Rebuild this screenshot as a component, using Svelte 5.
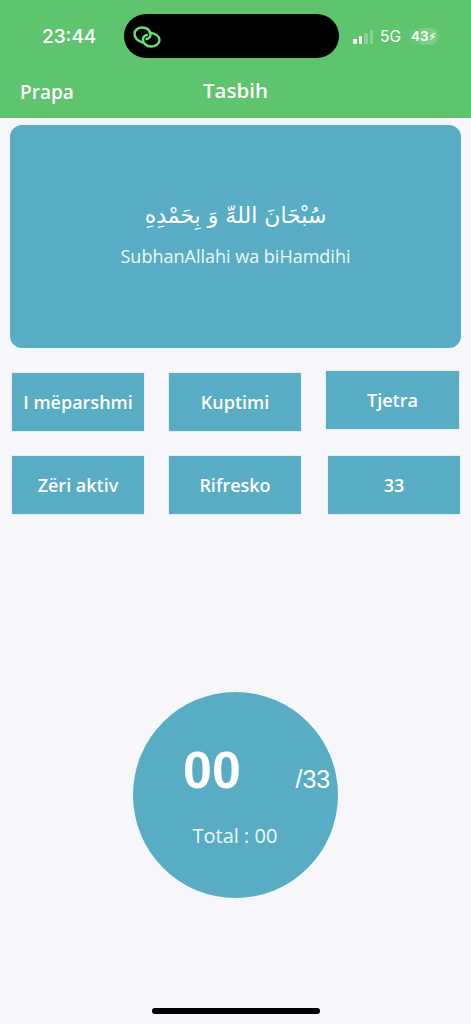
<script>
  const rows = [
    [{ label: 'I mëparshmi' }, { label: 'Kuptimi' }, { label: 'Tjetra', cls: 'up' }],
    [{ label: 'Zëri aktiv' }, { label: 'Rifresko' }, { label: '33', cls: 'right' }]
  ];
</script>

<div class="page">
  <header class="head">
    <div class="status">
      <span class="time">23:44</span>
      <div class="island">
        <svg class="link" width="28" height="22" viewBox="0 0 28 22" fill="none" stroke="#66e274" stroke-width="2.4" stroke-linecap="round">
          <path d="M10 16.5 C5 15.5 1.5 12 1.5 8 C1.5 4 5 1.5 9.5 1.5 C14 1.5 17.5 4.5 17.5 8.5 C17.5 10.5 16 12.5 13.5 13" />
          <path d="M16.5 6.5 C22.5 7.5 26.5 10.5 26.5 14 C26.5 18 22.5 20.5 18 20.5 C13.5 20.5 10 17.5 10 13.5 C10 11.5 11.5 9.5 14 9" />
        </svg>
      </div>
      <div class="sys">
        <div class="bars">
          <i class="b1"></i><i class="b2"></i><i class="b3"></i><i class="b4"></i>
        </div>
        <span class="net">5G</span>
        <div class="batt"><span class="fill"></span><span class="pct">43</span><span class="bolt">⚡︎</span><span class="nub"></span></div>
      </div>
    </div>
    <nav class="nav">
      <span class="back">Prapa</span>
      <span class="title">Tasbih</span>
    </nav>
  </header>

  <section class="card">
    <div class="arabic" dir="rtl" lang="ar">سُبْحَانَ اللهِّ وَ بِحَمْدِهِ</div>
    <div class="translit">SubhanAllahi wa biHamdihi</div>
  </section>

  <div class="grid">
    {#each rows as row}
      {#each row as b}
        <button class="btn {b.cls ?? ''}">{b.label}</button>
      {/each}
    {/each}
  </div>

  <div class="counter">
    <div class="nums">
      <span class="big">00</span>
      <span class="of">/33</span>
    </div>
    <div class="total">Total : 00</div>
  </div>

  <div class="homebar"></div>
</div>

<style>
  :global(body) {
    margin: 0;
    background: #f7f6fb;
  }
  .page {
    width: 471px;
    height: 1024px;
    position: relative;
    overflow: hidden;
    background: #f7f6fb;
    font-family: "Open Sans", "Noto Sans", sans-serif;
    color: #fff;
  }
  .head {
    height: 118px;
    background: #5fc46e;
    box-sizing: border-box;
    padding-top: 14px;
  }
  .status {
    height: 44px;
    display: flex;
    align-items: center;
    padding-left: 42px;
  }
  .time {
    width: 82px;
    font-family: Inter, "Liberation Sans", sans-serif;
    font-size: 19px;
    font-weight: 500;
  }
  .island {
    width: 215px;
    height: 44px;
    border-radius: 22px;
    background: #000;
    display: flex;
    align-items: center;
    padding-left: 9px;
    box-sizing: border-box;
  }
  .link {
    margin-top: 1px;
  }
  .sys {
    display: flex;
    align-items: center;
    margin-left: 14px;
  }
  .bars {
    display: flex;
    align-items: flex-end;
    gap: 2px;
    height: 15px;
    margin-right: 7px;
  }
  .bars i {
    display: block;
    width: 3.5px;
    border-radius: 1px;
    background: #fff;
  }
  .b1 { height: 5px; }
  .b2 { height: 8px; }
  .bars .b3 { height: 11px; background: rgba(255,255,255,0.25); }
  .bars .b4 { height: 14px; background: rgba(255,255,255,0.25); }
  .net {
    font-family: Inter, "Liberation Sans", sans-serif;
    font-size: 15.5px;
    font-weight: 400;
    margin-right: 8px;
  }
  .batt {
    position: relative;
    width: 28px;
    height: 17px;
    border-radius: 5px;
    background: rgba(255,255,255,0.04);
    display: flex;
    align-items: center;
    font-family: Inter, "Liberation Sans", sans-serif;
    font-size: 13.5px;
    font-weight: 600;
    line-height: 17px;
    padding-left: 2px;
    box-sizing: border-box;
  }
  .fill {
    position: absolute;
    left: 11px;
    top: 0;
    bottom: 0;
    right: 0;
    border-radius: 0 5px 5px 0;
    background: rgba(255,255,255,0.14);
  }
  .nub {
    position: absolute;
    right: -2px;
    top: 6px;
    width: 1.5px;
    height: 5px;
    border-radius: 0 1px 1px 0;
    background: rgba(255,255,255,0.2);
  }
  .pct { position: relative; }
  .bolt { position: relative; font-size: 10px; }
  .nav {
    position: relative;
    display: flex;
    justify-content: center;
    align-items: center;
    height: 30px;
    margin-top: 17px;
  }
  .back {
    position: absolute;
    left: 20px;
    top: 2px;
    font-size: 19px;
    font-weight: 550;
    line-height: 30px;
  }
  .title {
    font-size: 20.5px;
    font-weight: 550;
    line-height: 30px;
  }
  .card {
    margin: 7px 10px 0;
    height: 223px;
    background: #58adc5;
    border-radius: 12px;
    display: flex;
    flex-direction: column;
    align-items: center;
    justify-content: center;
    box-sizing: border-box;
  }
  .arabic {
    font-family: "DejaVu Sans", "Noto Sans", sans-serif;
    font-size: 22px;
    line-height: 40px;
    margin-top: -9px;
    margin-bottom: 7px;
  }
  .translit {
    font-size: 18px;
    line-height: 26px;
    color: #f0f8fa;
  }
  .grid {
    display: grid;
    grid-template-columns: repeat(3, 132px);
    column-gap: 25px;
    row-gap: 25px;
    margin: 25px 0 0 12px;
  }
  .btn {
    height: 58px;
    width: 132px;
    padding: 0;
    border: 0;
    border-radius: 0;
    background: #58adc5;
    box-shadow: 0 0 0 0.5px rgba(190, 228, 238, 0.7);
    color: #fff;
    font-family: "Open Sans", "Noto Sans", sans-serif;
    font-size: 18px;
    font-weight: 550;
  }
  .btn.up {
    margin: -2px 0 0 0;
    width: 133px;
  }
  .btn.right {
    margin-left: 2px;
  }
  .counter {
    width: 205px;
    height: 206px;
    margin: 178px 0 0 133px;
    border-radius: 50%;
    background: #58adc5;
    box-sizing: border-box;
    padding-top: 44px;
    display: flex;
    flex-direction: column;
  }
  .nums {
    display: flex;
    align-items: baseline;
    height: 70px;
    padding-left: 50px;
  }
  .big {
    font-family: "Liberation Sans", Arial, sans-serif;
    font-size: 52px;
    font-weight: 700;
    line-height: 68px;
    width: 112.5px;
  }
  .of {
    font-family: "Liberation Sans", Arial, sans-serif;
    font-size: 25px;
    line-height: 30px;
  }
  .total {
    text-align: center;
    font-size: 20px;
    line-height: 28px;
    margin-top: 16px;
    padding-right: 1px;
    color: #f0f8fa;
  }
  .homebar {
    position: absolute;
    left: 152px;
    top: 1008px;
    width: 168px;
    height: 6px;
    border-radius: 3px;
    background: #000;
  }
</style>
